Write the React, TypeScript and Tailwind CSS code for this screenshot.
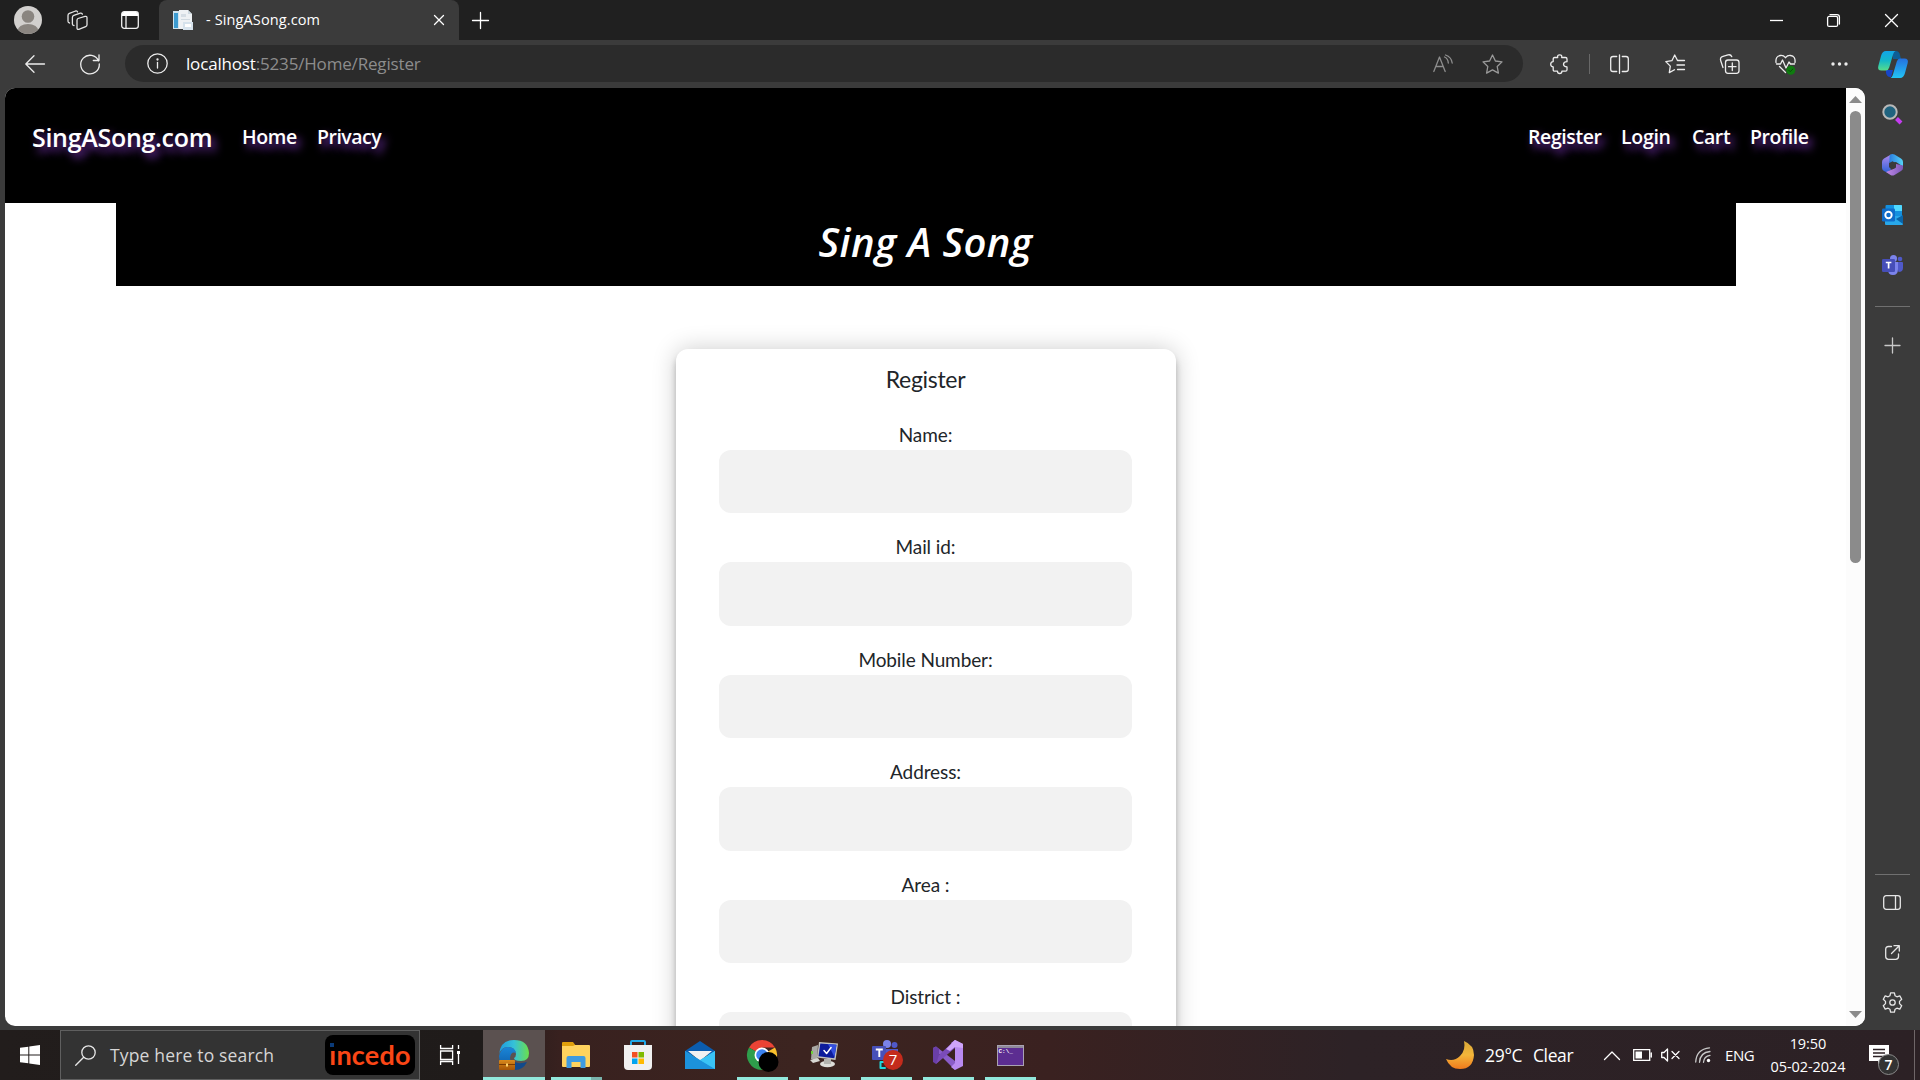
import React from "react";

type IconProps = { w: number; h: number; className?: string; children: React.ReactNode };

function Icon({ w, h, className = "", children }: IconProps) {
  return (
    <svg
      width={w}
      height={h}
      viewBox={`0 0 ${w} ${h}`}
      fill="none"
      stroke="currentColor"
      strokeWidth={1.3}
      strokeLinecap="round"
      strokeLinejoin="round"
      className={`block shrink-0 overflow-visible ${className}`}
    >
      {children}
    </svg>
  );
}

/* ---------- Browser chrome ---------- */

function TabStrip() {
  return (
    <div className="flex h-10 items-center bg-[#202020] text-white">
      <Icon w={28} h={28} className="ml-[14px]">
        <clipPath id="avatar"><circle cx="14" cy="14" r="14" /></clipPath>
        <g clipPath="url(#avatar)" stroke="none">
          <rect width="28" height="28" fill="#d2d0ce" />
          <circle cx="14" cy="10.5" r="6.3" fill="#8a8580" />
          <ellipse cx="14" cy="25" rx="10.5" ry="7" fill="#8a8580" />
        </g>
      </Icon>
      <Icon w={21} h={20} className="ml-[25px] text-[#e4e4e4]">
        <path d="M11 8.500 18 6.400q2-.5 2 1.400v7q0 1.400-1.300 1.800l-6.900 2.700q-1.800.5-1.800-1.400v-7.600q0-1.400 1-1.800z" />
        <path d="M7 15.500q-1.600 0-1.600-1.500v-6.600q0-1.500 1.400-2l6.600-2.200q1.600-.4 2 1" />
        <path d="M2.500 13Q1 12.800 1 11.300V5.500Q1 4 2.400 3.400L8.600 1q1.600-.4 2 1" />
      </Icon>
      <Icon w={18} h={18} className="ml-[33px] text-[#f0f0f0]">
        <rect x=".7" y=".7" width="16.600" height="16.600" rx="2.500" />
        <path d="M1 2.500Q1 1 3 1h12q2 0 2 1.500V5H1z" fill="#fff" stroke="none" />
        <path d="M5 5v12" />
      </Icon>
      <div className="ml-5 flex h-10 w-[300px] items-center rounded-t-lg bg-[#3b3b3b]">
        <Icon w={20} h={20} className="ml-[14px]">
          <g stroke="none">
            <rect x="0" y="1" width="11" height="18" fill="#cfe3ee" />
            <rect x="1" y="3" width="4" height="15" fill="#3d9bd0" />
            <path d="M6 0h9l4 4v15H6z" fill="#eef1f4" />
            <path d="M15 0l4 4h-4z" fill="#cdd8e0" />
            <rect x="8" y="4" width="5" height="3" fill="#d5dde4" />
            <rect x="8" y="9" width="9" height="1" fill="#d0d9e0" />
            <rect x="10" y="12" width="10" height="8" fill="#d6e2ec" />
            <rect x="12" y="14" width="6" height="3" fill="#fff" />
          </g>
        </Icon>
        <span className="ml-[13px] w-[200px] text-[14.5px] leading-5 tracking-[0.12px] whitespace-pre">- SingASong.com</span>
        <Icon w={10} h={10} className="ml-[28px]">
          <path d="M.5.5l9 9M9.500.5l-9 9" />
        </Icon>
      </div>
      <Icon w={17} h={17} className="ml-[13px]">
        <path d="M8.500.5v16M.5 8.500h16" />
      </Icon>
      <div className="ml-auto flex items-center pr-[22px]">
        <Icon w={13} h={13} className="mr-11"><path d="M0 6.500h13" strokeLinecap="butt" /></Icon>
        <Icon w={13} h={13} className="mr-[45px]">
          <rect x=".6" y="2.400" width="10" height="10" rx="1.500" />
          <path d="M3 .6h7q2.400 0 2.400 2.400v7" />
        </Icon>
        <Icon w={13} h={13}><path d="M.5.5l12 12M12.500.5l-12 12" /></Icon>
      </div>
    </div>
  );
}

function Toolbar() {
  return (
    <div className="flex h-12 items-center bg-[#3b3b3b] text-[#ededed]">
      <Icon w={20} h={18} className="ml-[25px]"><path d="M19.500 9H1M9 .8.8 9 9 17.200" /></Icon>
      <Icon w={20} h={20} className="ml-[35px]">
        <path d="M18.600 7A9.300 9.300 0 1 0 19.300 10M19 .8V6.500h-5.700" />
      </Icon>
      <div className="mb-[1px] ml-[25px] flex h-[37px] w-[1398px] items-center rounded-full bg-[#2b2b2b]">
        <Icon w={21} h={21} className="ml-[22px]">
          <circle cx="10.500" cy="10.500" r="9.700" />
          <path d="M10.500 9.500v5.500" />
          <circle cx="10.500" cy="6.500" r=".5" fill="currentColor" />
        </Icon>
        <span className="ml-[18px] text-[17px] leading-6 tracking-[-0.17px] text-[#8d8d8d]"><span className="text-white">localhost</span>:5235/Home/Register</span>
        <Icon w={20} h={19} className="mr-[29px] ml-auto text-[#8d8d8d]">
          <path d="M.8 17.500 6.500 3l5.700 14.500M2.800 12.500h7.500M11.500 3q3.500 1.500 3.800 6M12.500 1q6 2 6.700 8" />
        </Icon>
        <Icon w={21} h={20} className="mr-5 text-[#9a9a9a]">
          <path d="M10.500 1l2.900 6 6.600.9-4.800 4.600 1.200 6.600-5.900-3.200-5.900 3.200 1.200-6.600L1 7.900 7.600 7z" />
        </Icon>
      </div>
      <Icon w={19} h={20} className="ml-[27px]">
        <path d="M4.500 3.500h3.200q-.5-2.700 2-2.700t2 2.700h3.800q1.500 0 1.500 1.500v2.700q-3.500.2-3.500 2.600t3.500 2.600v2.800q0 1.500-1.500 1.500h-3.600q0 2.300-2.200 2.300t-2.200-2.300H4.700q-1.500 0-1.500-1.500v-2.900Q.7 12.600.7 10.200t2.500-2.600V5q0-1.500 1.300-1.500z" />
      </Icon>
      <div className="ml-5 h-5 w-px bg-[#686868]" />
      <Icon w={19} h={20} className="ml-[20px]">
        <path d="M9.500.8v18.500M6.700 2.500H3q-2.300 0-2.300 2.300v10.400q0 2.300 2.300 2.300h3.700M12.300 2.500H16q2.300 0 2.300 2.300v10.400q0 2.300-2.300 2.300h-3.700" />
      </Icon>
      <Icon w={20} h={20} className="ml-[36px]">
        <path d="M12.500 6.500 9.700 1 6.900 6.700.8 7.600l4.500 4.500-1 6.500 5.200-2.900M12.500 6.500h7M12 11h7.500M12.500 15.500h7" />
      </Icon>
      <Icon w={21} h={20} className="ml-[34px]">
        <rect x="6.500" y="6" width="13.500" height="13.300" rx="2.500" />
        <path d="M13.300 9v7.500M9.500 12.700H17M4 13.500 1.800 7Q.5 3.500 4 2.300L9 .9q2.700-.8 3.800 1.800" />
      </Icon>
      <Icon w={21} h={20} className="ml-[35px]">
        <path d="M1 8.500Q.3 2 5.500 1.500q3-.3 5 2.200 2-2.500 5-2.200Q20.700 2 20 8.500M1.500 10h4l2-4 3.500 8 3-6 1.500 2h4M4.500 12.500l6 6" />
        <circle cx="15.800" cy="16.300" r="4.500" fill="#0f7b0f" stroke="none" />
        <path d="M13.800 16.300l1.400 1.400 2.700-2.700" stroke="#0a4a0a" strokeWidth={1} />
      </Icon>
      <Icon w={17} h={4} className="ml-[35px]">
        <g fill="currentColor" stroke="none"><circle cx="2" cy="2" r="1.700" /><circle cx="8.500" cy="2" r="1.700" /><circle cx="15" cy="2" r="1.700" /></g>
      </Icon>
      <Icon w={30} h={27} className="ml-[30px]">
        <defs>
          <linearGradient id="cpA" x1="0" y1="0" x2="0" y2="1"><stop stopColor="#12a5e8" /><stop offset=".5" stopColor="#14b8c8" /><stop offset="1" stopColor="#57dd8a" /></linearGradient>
          <linearGradient id="cpB" x1="0" y1="0" x2="0" y2="1"><stop stopColor="#2470e0" /><stop offset="1" stopColor="#22c4f5" /></linearGradient>
        </defs>
        <g stroke="none">
          <path d="M14 0h4q3 0 4 4l1 4h-8z" fill="#0d5e96" />
          <path d="M8 19h7l-2 7h-1q-3 0-4-4z" fill="#1746c8" />
          <path d="M8 0h9.500q-1.500.5-2.300 3l-4 13.500Q10.300 19.500 8 19.500H3.500Q-.8 19.500.3 15L3 5Q4.300 0 8 0z" fill="url(#cpA)" />
          <path d="M22 27h-9.500q1.500-.5 2.300-3l4-13.500Q19.700 7.500 22 7.500h4.500q4.300 0 3.200 4.500L27 22q-1.300 5-5 5z" fill="url(#cpB)" />
        </g>
      </Icon>
    </div>
  );
}

function SideSlot({ children }: { children: React.ReactNode }) {
  return <div className="flex h-[50px] w-[54px] items-center justify-center">{children}</div>;
}

function Sidebar() {
  return (
    <aside className="flex w-[55px] shrink-0 flex-col bg-[#3b3b3b] pt-[2px] text-[#e6e6e6]">
      <SideSlot>
        <Icon w={21} h={21} className="mb-[2px]">
          <path d="M14.500 14.500l4.500 4.500" stroke="#c43cf0" strokeWidth={4} strokeLinecap="butt" />
          <circle cx="8" cy="8" r="6.700" fill="#20637f" stroke="#b8b8b8" strokeWidth={2} />
        </Icon>
      </SideSlot>
      <SideSlot>
        <Icon w={21} h={22}>
          <defs>
            <linearGradient id="m1" x1="0" y1="0" x2="0" y2="1"><stop stopColor="#b08af0" /><stop offset="1" stopColor="#2f62d8" /></linearGradient>
            <linearGradient id="m2"><stop stopColor="#2a7de0" /><stop offset="1" stopColor="#55d4f8" /></linearGradient>
            <linearGradient id="m3"><stop stopColor="#c28ae8" /><stop offset="1" stopColor="#7a58b8" /></linearGradient>
          </defs>
          <g stroke="none">
            <path d="M9 .5 2 4.500Q0 5.500 0 8v6q0 2 2 3l3 1.500 4-3-2-4z" fill="url(#m1)" />
            <path d="M10.500 0q1 0 2 .6L19 4.500q2 1 2 3.500v4.500L14 8 7.500 9V3q0-3 3-3z" fill="url(#m2)" />
            <path d="M21 11.500v2.500q0 2-2 3l-6.500 4q-2 1-4 0L4 18 13.500 14l.5-4z" fill="url(#m3)" />
            <path d="M10.500 7.200l3.500 2v4l-3.500 2-3.500-2v-4z" fill="#3b3b3b" />
          </g>
        </Icon>
      </SideSlot>
      <SideSlot>
        <Icon w={21} h={20}>
          <g stroke="none">
            <rect x="3.500" y="0" width="16.500" height="12" rx="1" fill="#1490df" />
            <path d="M12 0h7q1 0 1 1v5h-8z" fill="#50d9ff" />
            <path d="M3 11h18v8q0 1-1 1H4q-1 0-1-1z" fill="#28a8ea" />
            <path d="M21 10v9l-7-5z" fill="#0a64a8" />
            <rect x="0" y="3.500" width="13" height="13" rx="1.300" fill="#0f6cc9" />
          </g>
          <circle cx="6.500" cy="10" r="3.200" stroke="#fff" strokeWidth={1.900} />
        </Icon>
      </SideSlot>
      <SideSlot>
        <Icon w={21} h={20}>
          <g stroke="none">
            <circle cx="18" cy="4" r="2.300" fill="#5059c9" />
            <circle cx="11.500" cy="3.500" r="3.500" fill="#7b83eb" />
            <path d="M14 7h6q1 0 1 1v5q0 4-4.500 4z" fill="#5059c9" />
            <path d="M6 7h10v7q0 6-5 6t-5-5z" fill="#7b83eb" />
            <rect x="0" y="4" width="13" height="13" rx="1.300" fill="#464eb8" />
          </g>
          <path d="M3.800 7.500h5.600M6.600 7.500v6" stroke="#fff" strokeWidth={1.700} strokeLinecap="butt" />
        </Icon>
      </SideSlot>
      <div className="mt-4 ml-[10px] h-px w-[35px] bg-[#707070]" />
      <div className="mt-[13px]">
        <SideSlot><Icon w={15} h={15} className="text-[#c8c8c8]"><path d="M7.500 0v15M0 7.500h15" /></Icon></SideSlot>
      </div>
      <div className="mt-auto ml-[10px] h-px w-[35px] bg-[#707070]" />
      <div className="mt-[2px] pb-[3px]">
        <SideSlot><Icon w={18} h={15}><rect x=".7" y=".7" width="16.600" height="13.600" rx="2.500" /><path d="M12.500 1v13" /></Icon></SideSlot>
        <SideSlot>
          <Icon w={15} h={15}><path d="M6.500 1.500H3.500Q.7 1.500.7 4.300v7.200q0 2.800 2.800 2.800h7.200q2.800 0 2.800-2.800V9M9 .7h5.300V6M14 1 6.500 8.500" /></Icon>
        </SideSlot>
        <SideSlot>
          <Icon w={21} h={21}>
            <path d="M8.600.8h3.800l.7 3 1.800 1 2.900-.9 1.900 3.300-2.200 2.200v2.200l2.200 2.200-1.900 3.300-2.900-.9-1.800 1-.7 3H8.600l-.7-3-1.800-1-2.900.9-1.900-3.300 2.200-2.200V9.400L1.300 7.200l1.900-3.300 2.900.9 1.800-1z" />
            <circle cx="10.500" cy="10.500" r="2.700" />
          </Icon>
        </SideSlot>
      </div>
    </aside>
  );
}

/* ---------- Web page ---------- */

const GLOW = "[text-shadow:4px_5px_8px_#7a35b5]";

function PageHeader() {
  return (
    <header className="flex h-[115px] shrink-0 items-start bg-black pt-[31px] text-[19.5px] leading-9 font-semibold text-white">
      <a className={`ml-[27px] w-[210px] text-[25px] tracking-[-0.3px] ${GLOW}`}>SingASong.com</a>
      <a className={`w-[75px] tracking-[-0.4px] ${GLOW}`}>Home</a>
      <a className={`tracking-[-0.5px] ${GLOW}`}>Privacy</a>
      <nav className="ml-auto flex w-[318px]">
        <a className={`w-[93px] tracking-[-0.4px] ${GLOW}`}>Register</a>
        <a className={`w-[71px] tracking-[-0.3px] ${GLOW}`}>Login</a>
        <a className={`w-[58px] tracking-[-0.4px] ${GLOW}`}>Cart</a>
        <a className={`tracking-[-0.4px] ${GLOW}`}>Profile</a>
      </nav>
    </header>
  );
}

const FIELDS = ["Name:", "Mail id:", "Mobile Number:", "Address:", "Area :", "District :"];

function RegisterCard() {
  return (
    <form className="mx-auto mt-[63px] h-[900px] w-[500px] shrink-0 rounded-xl bg-white px-[43px] pt-[13px] text-[#212529] shadow-[0_0_25px_rgba(0,0,0,0.2),0_6px_6px_rgba(0,0,0,0.24)] [font-family:'Gill_Sans','Lato',sans-serif]">
      <h2 className="h-[59.6px] text-center text-[23px] leading-[35px] tracking-[-0.3px]">Register</h2>
      {FIELDS.map((label) => (
        <label key={label} className="flex h-[112.5px] flex-col text-center text-[19px] leading-[26px] tracking-[-0.1px]">
          <span className="h-7">{label}</span>
          <input className="block h-[63.5px] w-[413px] rounded-xl bg-[#f2f2f2]" />
        </label>
      ))}
    </form>
  );
}

function ScrollBar() {
  return (
    <div className="flex w-[19px] shrink-0 flex-col items-center bg-[#fcfcfc] pt-2 pb-2 text-[#8b8b8b]">
      <Icon w={13} h={7}><path d="M0 7 6.500 0 13 7z" fill="currentColor" stroke="none" /></Icon>
      <div className="mt-2 h-[452px] w-[11px] rounded-full bg-[#8b8b8b]" />
      <Icon w={13} h={7} className="mt-auto"><path d="M0 0 6.500 7 13 0z" fill="currentColor" stroke="none" /></Icon>
    </div>
  );
}

function Viewport() {
  return (
    <main className="ml-[5px] flex h-[938px] w-[1860px] overflow-hidden rounded-[10px] bg-white">
      <div className="flex flex-1 flex-col overflow-hidden">
        <PageHeader />
        <h1 className="mx-auto h-[83px] w-[1620px] shrink-0 bg-black pt-[9px] text-center text-[40px] leading-[60px] font-semibold tracking-[0.4px] text-white italic">Sing A Song</h1>
        <RegisterCard />
      </div>
      <ScrollBar />
    </main>
  );
}

/* ---------- Taskbar ---------- */

function EdgeIcon() {
  return (
    <Icon w={30} h={30}>
      <defs>
        <linearGradient id="e1"><stop stopColor="#1e9ae0" /><stop offset=".5" stopColor="#35c1d8" /><stop offset="1" stopColor="#6be04a" /></linearGradient>
        <linearGradient id="e2" x1="0" y1="0" x2="0" y2="1"><stop stopColor="#1b86d8" /><stop offset="1" stopColor="#0c59a4" /></linearGradient>
        <linearGradient id="e3" x1="0" y1="0" x2="0" y2="1"><stop stopColor="#d98a1c" /><stop offset="1" stopColor="#a55405" /></linearGradient>
      </defs>
      <g stroke="none">
        <path d="M0 15Q1 0 15 0q14 0 15 13 0 8-8 8-7 0-7-3 2-1 2-4Q16 7 9 7 2 7 0 15z" fill="url(#e1)" />
        <path d="M0 16Q2 7 9 7q7 0 8 6-5-2-6 5 0 8 9 9-2 3-6 3Q0 29 0 16z" fill="url(#e2)" />
        <path d="M13 20q5 5 15 2-4 8-12 8z" fill="#114a8b" />
        <rect x="0" y="20" width="16" height="10" rx="1" fill="url(#e3)" />
        <rect x="0" y="24" width="16" height="1" fill="#7a3c02" />
        <rect x="7" y="23.500" width="2" height="3" fill="#ffd36b" />
      </g>
    </Icon>
  );
}

function FolderIcon() {
  return (
    <Icon w={28} h={26}>
      <g stroke="none">
        <path d="M0 1q0-1 1-1h10l3 4v6H0z" fill="#e0a00c" />
        <path d="M0 4h11l2-1h14q1 0 1 1v20q0 1-1 1H1q-1 0-1-1z" fill="#ffd35e" />
        <path d="M4.500 26V16q0-2 2-2h15q2 0 2 2v10h-5v-6h-9v6z" fill="#3f9be0" />
      </g>
    </Icon>
  );
}

function StoreIcon() {
  return (
    <Icon w={30} h={30}>
      <path d="M8 6V2q0-1 1-1h12q1 0 1 1v4" stroke="#1fa8e8" strokeWidth={2} />
      <g stroke="none">
        <path d="M1 5h28v21q0 4-4 4H5q-4 0-4-4z" fill="#f0f0f0" />
        <path d="M9 12h5.500v5.500H9z" fill="#f25022" />
        <path d="M15.500 12H21v5.500h-5.500z" fill="#7fba00" />
        <path d="M9 18.500h5.500V24H9z" fill="#00a4ef" />
        <path d="M15.500 18.500H21V24h-5.500z" fill="#ffb900" />
      </g>
    </Icon>
  );
}

function MailIcon() {
  return (
    <Icon w={30} h={28}>
      <g stroke="none">
        <path d="M0 10 15 0l15 10v4H0z" fill="#0b5cae" />
        <path d="M3 10h24L15 20z" fill="#f2f2f2" />
        <path d="M0 10l15 9.500L30 10v18H0z" fill="#2db4ee" />
        <path d="M0 10l30 18H0z" fill="#1c92dc" />
        <path d="M30 10v18L15 19z" fill="#3ac4f6" />
      </g>
    </Icon>
  );
}

function ChromeIcon() {
  return (
    <Icon w={30} h={30}>
      <g stroke="none">
        <path d="M15 15 2 7.500A15 15 0 0 1 28 7.500H15z" fill="#ea4335" />
        <path d="M15 15 28 7.500A15 15 0 0 1 15 30z" fill="#fbc02d" />
        <path d="M15 15v15A15 15 0 0 1 2 7.500z" fill="#2e9e4b" />
        <circle cx="15" cy="15" r="7.500" fill="#fff" />
        <circle cx="15" cy="15" r="5.800" fill="#3b82f0" />
        <circle cx="21.500" cy="22" r="10" fill="#000" />
      </g>
    </Icon>
  );
}

function RemoteIcon() {
  return (
    <Icon w={28} h={26}>
      <g stroke="none">
        <path d="M2 5l6-2-1 16-6-2z" fill="#a9a9a4" />
        <path d="M1 9h2v3H1z" fill="#6fd13a" />
        <path d="M0 18l8-2 2 3-7 2z" fill="#d8d8d4" />
        <ellipse cx="17.500" cy="22" rx="7.500" ry="3.200" fill="#dededa" />
        <path d="M14 17h7v5h-7z" fill="#b4b4b0" />
        <path d="M9 0 28 1.500 25.500 18 7 15.500z" fill="#c4c4c0" />
        <path d="M10.300 1.500 26.500 2.800l-2.200 13.500L8.500 14.200z" fill="#0d1c9c" />
        <path d="M18 2.100l8.500.7-2 12.500z" fill="#3450e0" />
      </g>
      <path d="M14 8.500l2.600 3 4.500-6" stroke="#fff" strokeWidth={1.500} />
    </Icon>
  );
}

function TeamsIcon() {
  return (
    <div className="relative">
      <Icon w={30} h={31}>
        <g stroke="none">
          <circle cx="23.500" cy="5" r="3" fill="#5059c9" />
          <circle cx="16" cy="4" r="4" fill="#7b83eb" />
          <path d="M9 9h18v10H9z" fill="#5059c9" />
          <rect x="1" y="6" width="14" height="14" rx="1" fill="#4750b8" />
        </g>
        <path d="M4.800 9.500h7M8.300 9.500v7.500" stroke="#fff" strokeWidth={1.900} strokeLinecap="butt" />
        <path d="M13 22H9.500v6H14" stroke="#20d8dc" strokeWidth={2} />
      </Icon>
      <span className="absolute top-[10px] left-[12px] flex size-5 items-center justify-center rounded-full bg-[#c42b1c] text-[15px] leading-none text-white">7</span>
    </div>
  );
}

function VisualStudioIcon() {
  return (
    <Icon w={30} h={30}>
      <g stroke="none">
        <path d="M0 8l3-1.500L22 21v9z" fill="#8a5cc8" />
        <path d="M0 8l3-1.500L6 9v12l-3 3-3-2z" fill="#6a3fa8" />
        <path d="M3 24 22 8V0L6 15z" fill="#7a4bb8" />
        <path d="M22 0l8 4v22l-8 4-4-3 4-4V7l-4-4z" fill="#b98af0" />
        <path d="M22 0l8 4v4l-8-1-5 4-4-2z" fill="#cfa4fa" />
      </g>
    </Icon>
  );
}

function TerminalIcon() {
  return (
    <div className="flex h-[21px] w-[27px] flex-col border border-[#a9a2b2] bg-[#5c2d91]">
      <div className="h-[2px] bg-[#8f8a99]" />
      <span className="pl-[1px] text-[6px] leading-[8px] font-bold text-white [font-family:'Liberation_Mono',monospace]">C:\_</span>
    </div>
  );
}

type TaskProps = { state?: "open" | "stacked" | "active"; children: React.ReactNode };

function Task({ state, children }: TaskProps) {
  return (
    <div className={`flex h-full w-[62px] flex-col items-center ${state === "active" ? "bg-[#5b5150]" : ""}`}>
      <div className="flex h-[47px] items-center justify-center pt-[3px]">{children}</div>
      {state === "active" && <div className="h-[3px] w-full bg-[#92e8dc]" />}
      {state === "open" && <div className="h-[3px] w-[51px] bg-[#92e8dc]" />}
      {state === "stacked" && (
        <div className="flex h-[3px] w-[51px]"><div className="w-10 bg-[#92e8dc]" /><div className="flex-1 bg-[#79b3ac]" /></div>
      )}
    </div>
  );
}

function Taskbar() {
  return (
    <footer className="flex h-[50px] items-center bg-[linear-gradient(90deg,#221d1c_0px,#1f1b1a_480px,#38211f_560px,#3c2420_800px,#3a2120_1050px,#2d2226_1350px,#2c2125_1920px)] text-white">
      <div className="flex w-[60px] justify-center">
        <Icon w={20} h={20}>
          <path d="M0 2.800 8.300 1.700V9.500H0zM9.300 1.500 20 0v9.500H9.300zM0 10.500h8.300v7.800L0 17.200zM9.300 10.500H20V20L9.300 18.500z" fill="#fff" stroke="none" />
        </Icon>
      </div>
      <div className="flex h-[50px] w-[360px] items-center border border-[#5f5f5f] bg-[#333] pr-1">
        <Icon w={21} h={21} className="ml-[14px] text-[#e8e8e8]"><circle cx="13.500" cy="7.500" r="6.700" /><path d="M8.700 12.300.7 20.300" /></Icon>
        <span className="ml-[14px] text-[17.5px] leading-6 tracking-[0.17px] text-[#d6d6d6]">Type here to search</span>
        <div className="ml-auto flex h-10 w-[90px] items-center justify-center rounded-lg bg-black pb-[1px] text-[27px] leading-none font-bold tracking-[0.2px] text-[#fa4616] [font-family:'Lato',sans-serif]">
          <span className="relative">ıncedo<span className="absolute top-[2px] left-[1px] size-[4px] bg-[#0a3a78]" /></span>
        </div>
      </div>
      <Icon w={20} h={20} className="ml-5">
        <g strokeLinecap="butt" strokeLinejoin="miter">
          <path d="M.6 0v3.500h12V0M.6 20v-3.500h12V20M.6 6h12v8.500H.6zM18.500 0v4M18.500 9v10" />
          <path d="M17 6h3v3h-3z" fill="#fff" stroke="none" />
        </g>
      </Icon>
      <div className="ml-[23px] flex h-full">
        <Task state="active"><EdgeIcon /></Task>
        <Task state="stacked"><FolderIcon /></Task>
        <Task><StoreIcon /></Task>
        <Task><MailIcon /></Task>
        <Task state="open"><ChromeIcon /></Task>
        <Task state="open"><RemoteIcon /></Task>
        <Task state="open"><TeamsIcon /></Task>
        <Task state="open"><VisualStudioIcon /></Task>
        <Task state="open"><TerminalIcon /></Task>
      </div>
      <div className="ml-auto flex h-full items-center">
        <Icon w={28} h={28}>
          <defs><linearGradient id="moon" x1="0" y1="0" x2="0" y2="1"><stop stopColor="#d8a838" /><stop offset=".5" stopColor="#f4b63a" /><stop offset="1" stopColor="#f07a1c" /></linearGradient></defs>
          <path d="M18 0Q28 4 28 14q-1 14-14 14Q4 28 0 18q8 3 14-3Q20 9 18 0z" fill="url(#moon)" stroke="none" />
        </Icon>
        <span className="ml-[11px] w-12 text-[17.5px] leading-6 tracking-[-0.3px] whitespace-nowrap">29°C</span>
        <span className="w-[71px] text-[17.5px] leading-6 tracking-[-0.4px]">Clear</span>
        <Icon w={16} h={9}><path d="M.5 8.500 8 1l7.500 7.500" /></Icon>
        <Icon w={19} h={12} className="ml-[13px]"><path d="M.7.7h16v10.600h-16zM18.300 4v4" strokeLinejoin="miter" /><path d="M2.500 2.500H9v7H2.500z" fill="#fff" stroke="none" /></Icon>
        <Icon w={19} h={14} className="ml-[9px]"><path d="M.7 4.500v5H3l3.500 3.500V1L3 4.500zM11 3.500l7 7M18 3.500l-7 7" /></Icon>
        <Icon w={16} h={16} className="ml-[15px] text-[#c8c8c8]">
          <path d="M.7 15Q1.500 2 14.500.8M4.500 15.300Q5 5.500 15 4.500M8.500 15.300Q9 9 15 8.300" />
          <circle cx="13.500" cy="13.500" r="1.700" fill="#fff" stroke="none" />
        </Icon>
        <span className="ml-[14px] w-[44px] text-[15px] leading-5 tracking-[-0.4px]">ENG</span>
        <div className="flex w-[78px] flex-col items-center text-[14.5px] leading-[23px] tracking-[-0.05px] whitespace-nowrap">
          <span>19:50</span>
          <span>05-02-2024</span>
        </div>
        <div className="relative ml-[22px] w-[45px]">
          <Icon w={20} h={20}>
            <path d="M0 0h20v16h-7l-4 4v-4H0z" fill="#fff" stroke="none" />
            <path d="M4 4.500h12M4 8h12M4 11.500h12" stroke="#2c2125" strokeLinecap="butt" />
          </Icon>
          <span className="absolute top-[9px] left-[9px] flex size-[21px] items-center justify-center rounded-full border border-[#8a8a8a] bg-[#333] text-[14px] leading-none font-semibold">7</span>
        </div>
        <div className="mr-[5px] h-full w-px bg-[#6f6668]" />
      </div>
    </footer>
  );
}

export default function App() {
  return (
    <div className="flex h-[1080px] w-[1920px] flex-col overflow-hidden bg-[#3b3b3b] [font-family:'Segoe_UI','Open_Sans',sans-serif]">
      <TabStrip />
      <Toolbar />
      <div className="flex h-[942px]">
        <Viewport />
        <Sidebar />
      </div>
      <Taskbar />
    </div>
  );
}
